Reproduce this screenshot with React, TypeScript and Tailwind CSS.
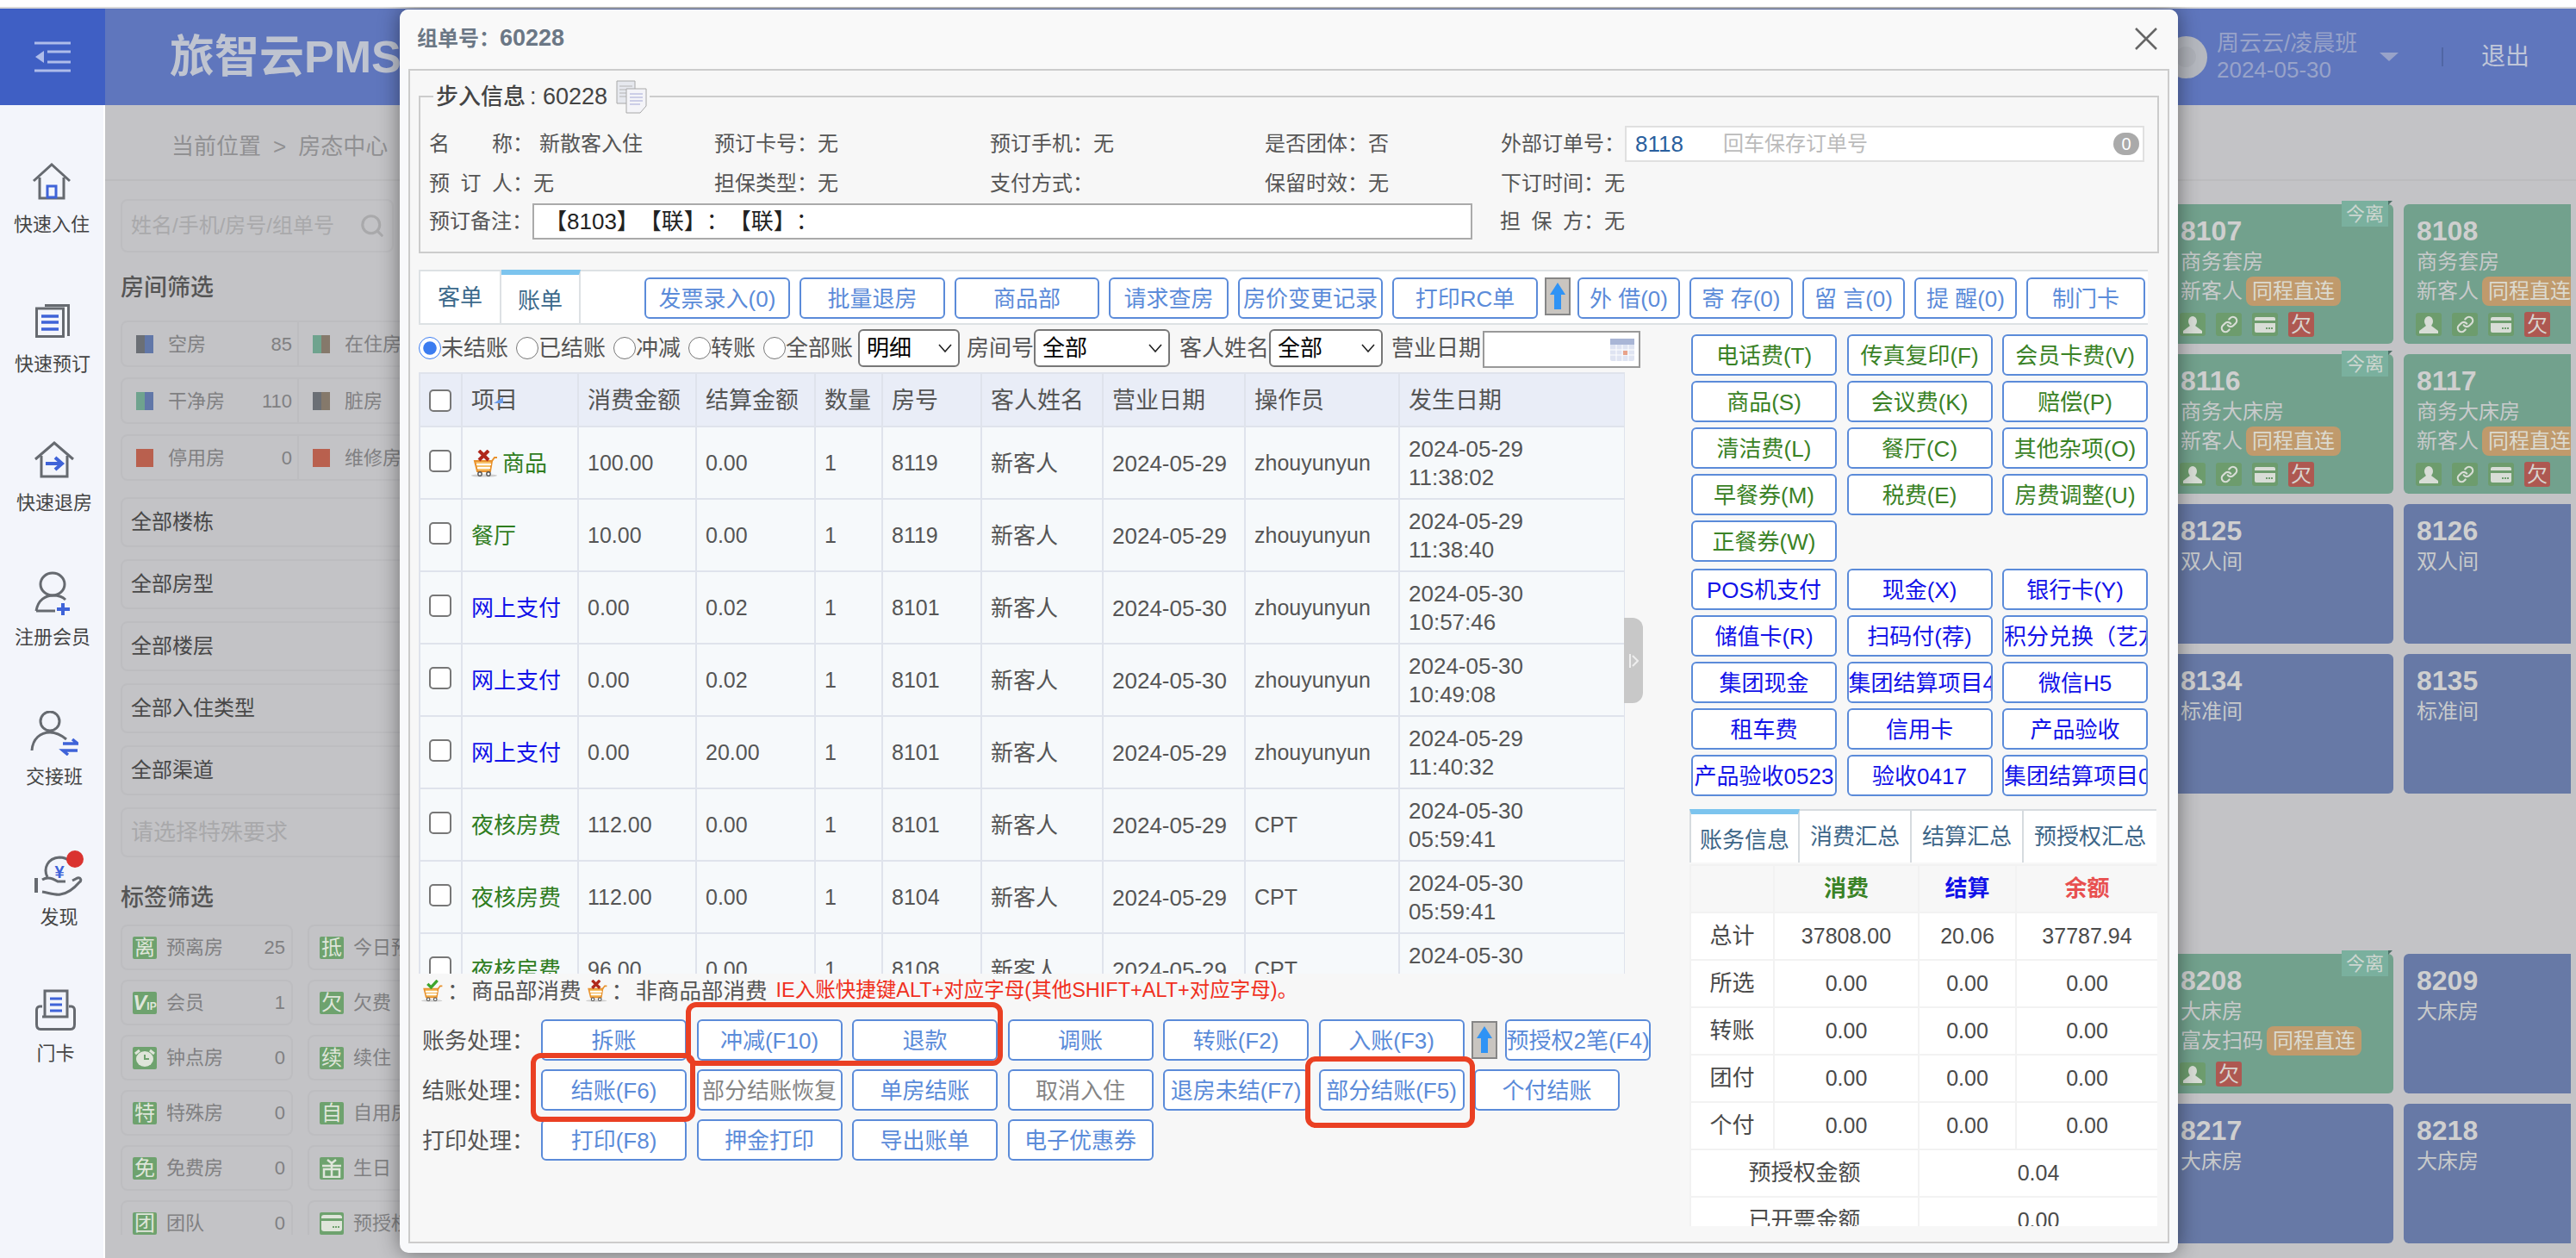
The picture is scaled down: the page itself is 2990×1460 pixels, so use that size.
import type { ReactNode } from 'react';
import { Link, Search } from 'lucide-react';

const blueBtn = 'text-[#5b8bd9]';
const grayBtn = 'text-[#858585]';
const greenBtn = 'text-[#3a8226]';
const payBtn = 'text-[#1212e8]';

function Btn({ label, className = '' }: { label: string; className?: string }) {
  return (
    <button className={`h-[48px] shrink-0 overflow-hidden whitespace-nowrap rounded-[6px] border-2 border-[#5b8bd9] bg-white pt-[2px] text-[26px] ${className}`}>
      {label}
    </button>
  );
}

function ArrowBox() {
  return (
    <svg width="30" height="44" viewBox="0 0 30 44" className="shrink-0">
      <rect x="1" y="1" width="28" height="42" fill="#c9c5c0" stroke="#868686" strokeWidth="2" />
      <path d="M15 6 L24 20 H19 V37 H11 V20 H6 Z" fill="#2f93f5" />
    </svg>
  );
}

function Cart({ mark, size = 32 }: { mark: 'x' | 'check'; size?: number }) {
  return (
    <svg width={size} height={size} viewBox="0 0 32 32" className="shrink-0">
      <ellipse cx="15" cy="30" rx="15" ry="1.6" fill="#cfcfcf" />
      <path d="M4 13 H24 L22 25 H7 Z" fill="#f6c26b" stroke="#e8912c" strokeWidth="2" />
      <path d="M6 17 H23 M7 21 H22" stroke="#fff" strokeWidth="2" />
      <path d="M24 13 L27 9 H30" fill="none" stroke="#e8912c" strokeWidth="2" />
      <circle cx="10" cy="28" r="2.2" fill="#fff" stroke="#555" strokeWidth="1.4" />
      <circle cx="20" cy="28" r="2.2" fill="#fff" stroke="#555" strokeWidth="1.4" />
      {mark === 'x' ? (
        <path d="M9 1 L20 12 M20 1 L9 12" stroke="#b0281c" strokeWidth="4" />
      ) : (
        <path d="M9 6 L14 11 L23 1" fill="none" stroke="#3ea52c" strokeWidth="4" />
      )}
    </svg>
  );
}

const gray = '#666a70';
const iconBlue = '#3f63d8';

const sideItems = [
  {
    label: '快速入住', box: 'h-[162px] pl-[16px]',
    icon: (
      <svg width="46" height="43" viewBox="0 0 46 43" fill="none">
        <path d="M2 21 L23 2 L44 21" stroke={gray} strokeWidth="3" />
        <path d="M9 17 V41 H37 V17" stroke={gray} strokeWidth="3" />
        <rect x="18" y="27" width="10" height="13" stroke={iconBlue} strokeWidth="3" />
      </svg>
    ),
  },
  {
    label: '快速预订', box: 'h-[161px] pl-[17px]',
    icon: (
      <svg width="40" height="39" viewBox="0 0 40 39" fill="none">
        <rect x="1.5" y="5" width="31" height="32.5" stroke={gray} strokeWidth="3" />
        <path d="M11 1.5 H38.5 V37" stroke={gray} strokeWidth="3" />
        <path d="M7 14 H27 M7 21 H27 M7 29 H27" stroke={iconBlue} strokeWidth="3.5" />
      </svg>
    ),
  },
  {
    label: '快速退房', box: 'h-[156px] pl-[19px]',
    icon: (
      <svg width="48" height="43" viewBox="0 0 48 43" fill="none">
        <path d="M2 21 L24 2 L46 21" stroke={gray} strokeWidth="3" />
        <path d="M9 17 V41 H39 V17" stroke={gray} strokeWidth="3" />
        <path d="M14 26 H32 M25 19 L33 26 L25 33" stroke={iconBlue} strokeWidth="4" />
      </svg>
    ),
  },
  {
    label: '注册会员', box: 'h-[162px] pl-[17px]',
    icon: (
      <svg width="42" height="52" viewBox="0 0 42 52" fill="none">
        <ellipse cx="21" cy="15" rx="14" ry="13" stroke={gray} strokeWidth="3" />
        <path d="M2 46 C4 33 13 28 22 28 C28 28 33 30 36 33" stroke={gray} strokeWidth="3" />
        <path d="M2 46 H24" stroke={gray} strokeWidth="3" />
        <path d="M33 37 V51 M26 44 H41" stroke={iconBlue} strokeWidth="4" />
      </svg>
    ),
  },
  {
    label: '交接班', box: 'h-[163px] pl-[30px]',
    icon: (
      <svg width="56" height="52" viewBox="0 0 56 52" fill="none">
        <ellipse cx="23" cy="12" rx="11" ry="11" stroke={gray} strokeWidth="3" />
        <path d="M2 46 C3 32 12 25 23 25 C30 25 36 28 42 33" stroke={gray} strokeWidth="3" />
        <path d="M38 38 H55 L49 33 M55 46 H38 L44 51" stroke={iconBlue} strokeWidth="3.5" />
      </svg>
    ),
  },
  {
    label: '发现', box: 'h-[158px] pl-[40px]',
    icon: (
      <svg width="57" height="57" viewBox="0 0 57 57" fill="none">
        <path d="M15 32 C10 22 15 10 29 9 C34 9 37 10 40 13" stroke={gray} strokeWidth="3" />
        <text x="29" y="33" textAnchor="middle" fontSize="20" fontWeight="700" fill={iconBlue} fontFamily="Liberation Sans">¥</text>
        <path d="M2 33 V50" stroke={gray} strokeWidth="4" />
        <path d="M9 35 C15 31 21 33 27 37 H36 M44 36 L50 33 C54 32 55 36 52 38 C46 45 38 51 30 52 C24 53 16 50 9 49" stroke={gray} strokeWidth="3" />
        <circle cx="47" cy="11" r="10" fill="#da3330" />
      </svg>
    ),
  },
  {
    label: '门卡', box: 'h-[100px] pl-[41px]',
    icon: (
      <svg width="47" height="48" viewBox="0 0 47 48" fill="none">
        <path d="M11 32 V2 H37 V32 H8" stroke={gray} strokeWidth="3" />
        <path d="M17 11 H31 M17 18 H31 M17 25 H31" stroke={iconBlue} strokeWidth="3" />
        <path d="M8 20 H5 C3 20 1.5 22 1.5 24 V41 C1.5 45 3 46.5 6 46.5 H41 C44 46.5 45.5 45 45.5 41 V24 C45.5 22 44 20 42 20 H39" stroke={gray} strokeWidth="3" />
      </svg>
    ),
  },
];

function Sidebar() {
  return (
    <div className="flex w-[120px] shrink-0 flex-col bg-[#f3f5fb] pt-[66px]">
      {sideItems.map((item) => (
        <div key={item.label} className={item.box}>
          <div className="flex w-fit flex-col items-center">
            <div className="flex h-[44px] items-center">{item.icon}</div>
            <div className="mt-[14px] whitespace-nowrap text-[22px] leading-[30px] text-[#444]">{item.label}</div>
          </div>
        </div>
      ))}
    </div>
  );
}

function Swatch({ colors }: { colors: string[] }) {
  return (
    <span className="flex h-[21px] w-[20px] shrink-0">
      {colors.map((c, i) => (
        <span key={i} className="h-full flex-1" style={{ backgroundColor: c }} />
      ))}
    </span>
  );
}

const statusRows = [
  { a: { colors: ['#6b6f75', '#6177a8'], text: '空房', n: '85' }, b: { colors: ['#6fa38e', '#85796b'], text: '在住房' } },
  { a: { colors: ['#6fa38e', '#6177a8'], text: '干净房', n: '110' }, b: { colors: ['#6b6f75', '#85796b'], text: '脏房' } },
  { a: { colors: ['#b9604e'], text: '停用房', n: '0' }, b: { colors: ['#b9604e'], text: '维修房' } },
];

const selects = ['全部楼栋', '全部房型', '全部楼层', '全部入住类型', '全部渠道'];

function CardGlyph() {
  return (
    <svg width="24" height="19" viewBox="0 0 24 19">
      <rect width="24" height="19" rx="3" fill="#dfe5da" />
      <rect y="4" width="24" height="3" fill="#6ea26e" />
      <path d="M13 14 H21" stroke="#6ea26e" strokeWidth="2" strokeDasharray="2 1" />
    </svg>
  );
}

const clockGlyph = (
  <svg width="26" height="22" viewBox="0 0 26 22">
    <ellipse cx="13" cy="12" rx="10" ry="9" fill="#dfe5da" />
    <path d="M13 7 V12 H18" fill="none" stroke="#6ea26e" strokeWidth="2" />
    <path d="M2 6 L7 2 M24 6 L19 2" stroke="#dfe5da" strokeWidth="3" />
  </svg>
);

const giftGlyph = (
  <svg width="24" height="22" viewBox="0 0 24 22" fill="none" stroke="#dfe5da" strokeWidth="2.5">
    <path d="M1 8 H23 M3 12 H21 V21 H3 Z M12 3 V21 M12 5 L7 1 M12 5 L17 1" />
  </svg>
);

const vipGlyph = (
  <span className="flex items-baseline font-bold italic leading-none">
    <span className="text-[24px]">V</span>
    <span className="text-[12px] not-italic">IP</span>
  </span>
);

const tagRows: { ia: ReactNode; a: string; n: string; ib: ReactNode; b: string }[] = [
  { ia: '离', a: '预离房', n: '25', ib: '抵', b: '今日预抵' },
  { ia: vipGlyph, a: '会员', n: '1', ib: '欠', b: '欠费' },
  { ia: clockGlyph, a: '钟点房', n: '0', ib: '续', b: '续住' },
  { ia: '特', a: '特殊房', n: '0', ib: '自', b: '自用房' },
  { ia: '免', a: '免费房', n: '0', ib: giftGlyph, b: '生日' },
  { ia: '团', a: '团队', n: '0', ib: <CardGlyph />, b: '预授权' },
];

function TagBox({ icon, text, n }: { icon: ReactNode; text: string; n?: string }) {
  return (
    <div className="flex h-[53px] w-[200px] shrink-0 items-center whitespace-nowrap rounded-[8px] border-2 border-[#bdbdc0] pl-[12px] pr-[7px] text-[22px] text-[#808082]">
      <span className="flex h-[26px] w-[28px] shrink-0 items-center justify-center rounded-[2px] bg-[#6ea26e] text-[24px] text-[#dfe5da]">{icon}</span>
      <span className="ml-[11px]">{text}</span>
      <span className="ml-auto">{n}</span>
    </div>
  );
}

function FilterColumn() {
  return (
    <div className="ml-[18px] flex w-[430px] shrink-0 flex-col pt-[21px]">
      <div className="flex h-[62px] w-[317px] items-center rounded-[8px] border-2 border-[#bdbdc0] pl-[10px] pr-[8px]">
        <span className="whitespace-nowrap text-[24px] text-[#a9a9ab]">姓名/手机/房号/组单号</span>
        <Search size={30} strokeWidth={2.5} className="ml-auto text-[#a9a9ab]" />
      </div>
      <div className="mt-[21px] h-[40px] text-[27px] font-medium leading-[40px] text-[#555]">房间筛选</div>
      <div className="mt-[18px] flex flex-col gap-[12px]">
        {statusRows.map((row) => (
          <div key={row.a.text} className="flex h-[54px] items-center overflow-hidden rounded-[8px] border-2 border-[#bdbdc0] text-[22px] text-[#808082]">
            <div className="flex h-full w-[205px] shrink-0 items-center border-r-2 border-[#bdbdc0] pl-[16px] pr-[6px]">
              <Swatch colors={row.a.colors} />
              <span className="ml-[17px]">{row.a.text}</span>
              <span className="ml-auto">{row.a.n}</span>
            </div>
            <div className="flex items-center pl-[16px]">
              <Swatch colors={row.b.colors} />
              <span className="ml-[17px]">{row.b.text}</span>
            </div>
          </div>
        ))}
      </div>
      <div className="mt-[19px] flex flex-col gap-[14px]">
        {selects.map((s) => (
          <div key={s} className="flex h-[58px] items-center rounded-[8px] border-2 border-[#bdbdc0] pl-[10px] text-[24px] text-[#484848]">{s}</div>
        ))}
        <div className="flex h-[58px] items-center rounded-[8px] border-2 border-[#bdbdc0] pl-[10px] text-[26px] text-[#a9a9ab]">请选择特殊要求</div>
      </div>
      <div className="mt-[27px] h-[40px] text-[27px] font-medium leading-[40px] text-[#555]">标签筛选</div>
      <div className="mt-[11px] flex h-[360px] flex-col gap-[11px] overflow-hidden">
        {tagRows.map((row) => (
          <div key={row.a} className="flex gap-[17px]">
            <TagBox icon={row.ia} text={row.a} n={row.n} />
            <TagBox icon={row.ib} text={row.b} />
          </div>
        ))}
      </div>
    </div>
  );
}

type RoomIcon = 'user' | 'link' | 'card' | 'owe';

const allIcons: RoomIcon[] = ['user', 'link', 'card', 'owe'];

const rooms: { no: string; type: string; guest?: string; today?: boolean; icons?: RoomIcon[]; box?: string }[] = [
  { no: '8107', type: '商务套房', guest: '新客人', today: true, icons: allIcons },
  { no: '8108', type: '商务套房', guest: '新客人', icons: allIcons },
  { no: '8116', type: '商务大床房', guest: '新客人', today: true, icons: allIcons },
  { no: '8117', type: '商务大床房', guest: '新客人', icons: allIcons },
  { no: '8125', type: '双人间' },
  { no: '8126', type: '双人间' },
  { no: '8134', type: '标准间' },
  { no: '8135', type: '标准间' },
  { no: '8208', type: '大床房', guest: '富友扫码', today: true, icons: ['user', 'owe'], box: 'mt-[174px]' },
  { no: '8209', type: '大床房', box: 'mt-[174px]' },
  { no: '8217', type: '大床房' },
  { no: '8218', type: '大床房' },
];

function RoomBadge({ kind }: { kind: RoomIcon }) {
  if (kind === 'owe') {
    return <span className="flex h-[29px] w-[30px] items-center justify-center rounded-[3px] bg-[#ae5851] text-[24px] text-[#d8d4d0]">欠</span>;
  }
  return (
    <span className="flex h-[27px] w-[30px] items-center justify-center rounded-[3px] bg-[#6d9c6d] text-[#d8ddd6]">
      {kind === 'user' && (
        <svg width="24" height="20" viewBox="0 0 24 20" fill="currentColor">
          <ellipse cx="12" cy="6" rx="5" ry="6" />
          <path d="M9 11 H15 L23 17 V20 H1 V17 Z" />
        </svg>
      )}
      {kind === 'link' && <Link size={21} strokeWidth={2.5} />}
      {kind === 'card' && (
        <svg width="24" height="18" viewBox="0 0 24 18">
          <rect width="24" height="18" rx="2" fill="currentColor" />
          <rect y="4" width="24" height="3" fill="#6d9c6d" />
          <path d="M13 13 H21" stroke="#6d9c6d" strokeWidth="2" strokeDasharray="2 1" />
        </svg>
      )}
    </span>
  );
}

function RoomCard({ no, type, guest, today, icons, box = '' }: (typeof rooms)[number]) {
  return (
    <div className={`relative h-[162px] w-[262px] rounded-[6px] pl-[15px] pt-[15px] ${guest ? 'bg-[#72a18d]' : 'bg-[#6779a6]'} ${box}`}>
      {today && (
        <>
          <span className="absolute right-[6px] top-[-4px] flex h-[30px] w-[54px] items-center justify-center bg-[#7ab09e] text-[22px] text-[#cdd6d0]">今离</span>
          <span className="absolute right-[1px] top-[-4px] h-0 w-0 border-b-[5px] border-l-[5px] border-b-transparent border-l-[#4d6f66]" />
        </>
      )}
      <div className="text-[32px] font-black leading-[32px] text-[#cfcfcf]">{no}</div>
      <div className="mt-[3px] whitespace-nowrap text-[24px] leading-[34px] text-[#c8cacb]">{type}</div>
      {guest && (
        <div className="flex h-[34px] items-center whitespace-nowrap text-[24px] text-[#c8cacb]">
          {guest}
          <span className="ml-[4px] flex h-[34px] items-center rounded-[8px] bg-[#c09a6c] px-[7px] text-[#dcdad0]">同程直连</span>
        </div>
      )}
      {icons && (
        <div className="mt-[7px] -ml-px flex items-center gap-[12px]">
          {icons.map((k) => (
            <RoomBadge key={k} kind={k} />
          ))}
        </div>
      )}
    </div>
  );
}

function Background() {
  return (
    <div className="flex h-full flex-col">
      <div className="h-[10px] shrink-0 border-b-2 border-[#d8d8d8] bg-white" />
      <div className="flex h-[112px] shrink-0 items-center bg-[#5f76bd]">
        <div className="flex h-full w-[122px] shrink-0 items-center justify-center bg-[#3f5fc4]">
          <svg width="42" height="36" viewBox="0 0 42 36" fill="none" stroke="#aebcea" strokeWidth="3">
            <path d="M0 2 H42 M15 12 H42 M15 24 H42 M0 34 H42" />
            <path d="M11 11 V25 L1 18 Z" fill="#aebcea" stroke="none" />
          </svg>
        </div>
        <div className="ml-[75px] text-[52px] font-bold leading-none text-[#bfc4d0]">旅智云PMS</div>
        <div className="ml-auto flex items-center pr-[54px]">
          <div className="flex h-[49px] w-[49px] items-center justify-center rounded-full bg-[#b5b8bf]">
            <div className="h-[24px] w-[24px] rounded-full bg-[#aeb1b8]" />
          </div>
          <div className="ml-[11px] w-[165px] whitespace-nowrap text-[26px] leading-[31px] text-[#98a3c9]">
            <div>周云云/凌晨班</div>
            <div>2024-05-30</div>
          </div>
          <div className="ml-[24px] h-0 w-0 border-x-[11px] border-t-[10px] border-x-transparent border-t-[#98a3c9]" />
          <div className="ml-[50px] h-[22px] w-[2px] bg-[#5066a4]" />
          <div className="ml-[44px] text-[28px] text-[#c0c6d8]">退出</div>
        </div>
      </div>
      <div className="flex min-h-0 flex-1">
        <Sidebar />
        <div className="ml-[2px] flex min-w-0 flex-1 flex-col bg-[#c3c3c6]">
          <div className="flex h-[88px] shrink-0 items-center border-b-2 border-[#bcbcbe] pl-[77px] pt-[11px] text-[26px] text-[#909092]">
            当前位置<span className="mx-[14px]">&gt;</span>房态中心
          </div>
          <div className="flex min-h-0 flex-1">
            <FilterColumn />
            <div className="ml-auto mr-[6px] w-[468px] overflow-hidden pt-[27px]">
              <div className="grid w-[536px] grid-cols-[262px_262px] gap-x-[12px] gap-y-[12px]">
                {rooms.map((r) => (
                  <RoomCard key={r.no} {...r} />
                ))}
              </div>
            </div>
          </div>
        </div>
      </div>
    </div>
  );
}

function Info({ label, value, w }: { label: ReactNode; value?: string; w: string }) {
  return (
    <div className={`flex shrink-0 items-center whitespace-nowrap ${w}`}>
      {label}
      {value && <span>{value}</span>}
    </div>
  );
}

function Spaced({ chars, pad }: { chars: string[]; pad: string }) {
  return (
    <span className={`flex ${pad}`}>
      <span className="flex w-[97px] justify-between">
        {chars.map((c) => (
          <span key={c}>{c}</span>
        ))}
      </span>
      <span>：</span>
    </span>
  );
}

function GuestInfo() {
  return (
    <fieldset className="mt-[10px] h-[202px] border-2 border-[#ccc] pl-[10px]">
      <legend className="ml-[5px] flex h-[40px] items-center px-[3px] text-[26px] text-[#444]">
        <span className="font-medium">步入信息</span>
        <span className="ml-[5px] text-[27px]">: 60228</span>
        <svg width="36" height="39" viewBox="0 0 36 39" className="ml-[10px]">
          <path d="M1 1 H22 V27 H1 Z" fill="#e6e8ee" stroke="#a8a8a8" />
          <path d="M4 7 H19 M4 11 H19 M4 15 H19 M4 19 H19" stroke="#b4b4b4" />
          <path d="M12 10 H35 V30 L28 38 H12 Z" fill="#f4f4f8" stroke="#a8a8a8" />
          <path d="M16 16 H31 M16 20 H31 M16 24 H31 M16 28 H28" stroke="#a4a8d6" />
        </svg>
      </legend>
      <div className="mt-[12px] flex h-[46px] items-center text-[24px] text-[#555]">
        <Info w="w-[331px]" label={<Spaced chars={['名', '称']} pad="mr-[7px]" />} value="新散客入住" />
        <Info w="w-[320px]" label="预订卡号：" value="无" />
        <Info w="w-[319px]" label="预订手机：" value="无" />
        <Info w="w-[274px]" label="是否团体：" value="否" />
        <Info w="w-[144px]" label="外部订单号：" />
        <div className="flex h-[42px] w-[603px] items-center border-2 border-[#e0e0e0] bg-white pl-[10px] pr-[4px]">
          <span className="w-[102px] text-[26px] text-[#2a5f9e]">8118</span>
          <span className="text-[#bbb]">回车保存订单号</span>
          <span className="ml-auto flex h-[26px] w-[30px] items-center justify-center rounded-full bg-[#aaa] text-[20px] text-white">0</span>
        </div>
      </div>
      <div className="flex h-[46px] items-center text-[24px] text-[#555]">
        <Info w="w-[331px]" label={<Spaced chars={['预', '订', '人']} pad="" />} value="无" />
        <Info w="w-[320px]" label="担保类型：" value="无" />
        <Info w="w-[319px]" label="支付方式：" />
        <Info w="w-[274px]" label="保留时效：" value="无" />
        <Info w="w-[144px]" label="下订时间：" value="无" />
      </div>
      <div className="flex h-[42px] items-center text-[24px] text-[#555]">
        <span className="w-[120px] shrink-0 whitespace-nowrap">预订备注：</span>
        <div className="flex h-[42px] w-[1091px] shrink-0 items-center whitespace-pre border-2 border-[#aaa] bg-white pl-[12px] text-[26px] text-[#222] [text-spacing-trim:space-all]">【8103】【联】：【联】：</div>
        <span className="ml-[32px]">
          <Info w="" label={<span className="flex"><span className="flex w-[97px] justify-between"><span>担</span><span>保</span><span>方</span></span><span>：</span></span>} value="无" />
        </span>
      </div>
    </fieldset>
  );
}

const topButtons = [
  { label: '发票录入(0)', w: 'w-[169px]' },
  { label: '批量退房', w: 'w-[169px]' },
  { label: '商品部', w: 'w-[168px]' },
  { label: '请求查房', w: 'w-[139px]' },
  { label: '房价变更记录', w: 'w-[168px]' },
  { label: '打印RC单', w: 'w-[169px]' },
];

const topButtons2 = [
  { label: '外 借(0)', w: 'w-[119px]' },
  { label: '寄 存(0)', w: 'w-[120px]' },
  { label: '留 言(0)', w: 'w-[119px]' },
  { label: '提 醒(0)', w: 'w-[119px]' },
  { label: '制门卡', w: 'w-[138px]' },
];

function TabBar() {
  return (
    <div className="mt-[19px] flex h-[64px] w-[2007px] border-y-2 border-[#dde1e4] bg-white">
      <div className="flex w-[96px] items-center justify-center border-x-2 border-[#dde1e4] text-[26px] text-[#3c6a8c]">客单</div>
      <div className="-mt-[2px] flex h-[64px] w-[92px] items-center justify-center border-t-[6px] border-r-2 border-t-[#7cc4ee] border-r-[#dde1e4] pt-[2px] text-[26px] text-[#3c6a8c]">账单</div>
      <div className="ml-[74px] flex items-start gap-[11px] pt-[7px]">
        {topButtons.map((b) => (
          <Btn key={b.label} label={b.label} className={`${b.w} ${blueBtn}`} />
        ))}
        <span className="-mx-[3px]"><ArrowBox /></span>
        {topButtons2.map((b) => (
          <Btn key={b.label} label={b.label} className={`${b.w} ${blueBtn}`} />
        ))}
      </div>
    </div>
  );
}

const radios = ['未结账', '已结账', '冲减', '转账', '全部账'];

function Sel({ label, w }: { label: string; w: string }) {
  return (
    <span className={`relative block h-[44px] shrink-0 ${w}`}>
      <select className="h-full w-full appearance-none rounded-[6px] border-2 border-[#777] bg-white pl-[8px] text-[26px] text-black" defaultValue={label}>
        <option>{label}</option>
      </select>
      <svg width="16" height="10" viewBox="0 0 16 10" fill="none" stroke="#222" strokeWidth="1.6" className="pointer-events-none absolute right-[9px] top-[17px]">
        <path d="M1 1 L8 9 L15 1" />
      </svg>
    </span>
  );
}

function FilterRow() {
  return (
    <div className="mt-[5px] flex h-[50px] items-start whitespace-nowrap text-[26px] text-[#555]">
      <div className="flex h-[44px] items-center">
        {radios.map((r, i) => (
          <label key={r} className="mr-[9px] flex items-center">
            <input type="radio" name="kind" defaultChecked={i === 0} className="m-0 h-[26px] w-[26px] accent-[#3b7cf0]" />
            {r}
          </label>
        ))}
      </div>
      <span className="-ml-[3px]"><Sel label="明细" w="w-[118px]" /></span>
      <span className="ml-[8px] leading-[44px]">房间号</span>
      <Sel label="全部" w="w-[158px]" />
      <span className="ml-[11px] leading-[44px]">客人姓名</span>
      <Sel label="全部" w="w-[132px]" />
      <span className="ml-[10px] leading-[44px]">营业日期</span>
      <div className="ml-[2px] mt-[2px] flex h-[43px] w-[183px] items-center justify-end border-2 border-[#999] bg-white pr-[5px]">
        <svg width="28" height="26" viewBox="0 0 28 26">
          <rect width="28" height="26" rx="2" fill="#dfe4f2" />
          <rect width="28" height="7" fill="#a9b6d6" />
          <path d="M7 7 V26 M14 7 V26 M21 7 V26 M0 13 H28 M0 19 H28" stroke="#fff" />
          <rect x="15" y="14" width="5" height="5" fill="#e8a38a" />
        </svg>
      </div>
    </div>
  );
}

const bills = [
  { item: '商品', cls: 'text-[#2f7d1e]', cart: true, a: '100.00', b: '0.00', room: '8119', biz: '2024-05-29', op: 'zhouyunyun', d: '2024-05-29', t: '11:38:02' },
  { item: '餐厅', cls: 'text-[#2f7d1e]', a: '10.00', b: '0.00', room: '8119', biz: '2024-05-29', op: 'zhouyunyun', d: '2024-05-29', t: '11:38:40' },
  { item: '网上支付', cls: 'text-[#1212e8]', a: '0.00', b: '0.02', room: '8101', biz: '2024-05-30', op: 'zhouyunyun', d: '2024-05-30', t: '10:57:46' },
  { item: '网上支付', cls: 'text-[#1212e8]', a: '0.00', b: '0.02', room: '8101', biz: '2024-05-30', op: 'zhouyunyun', d: '2024-05-30', t: '10:49:08' },
  { item: '网上支付', cls: 'text-[#1212e8]', a: '0.00', b: '20.00', room: '8101', biz: '2024-05-29', op: 'zhouyunyun', d: '2024-05-29', t: '11:40:32' },
  { item: '夜核房费', cls: 'text-[#2f7d1e]', a: '112.00', b: '0.00', room: '8101', biz: '2024-05-29', op: 'CPT', d: '2024-05-30', t: '05:59:41' },
  { item: '夜核房费', cls: 'text-[#2f7d1e]', a: '112.00', b: '0.00', room: '8104', biz: '2024-05-29', op: 'CPT', d: '2024-05-30', t: '05:59:41' },
  { item: '夜核房费', cls: 'text-[#2f7d1e]', a: '96.00', b: '0.00', room: '8108', biz: '2024-05-29', op: 'CPT', d: '2024-05-30', t: '05:59:41' },
];

const widths = ['w-[49px]', 'w-[135px]', 'w-[137px]', 'w-[138px]', 'w-[78px]', 'w-[115px]', 'w-[141px]', 'w-[165px]', 'w-[179px]', 'w-[262px]'];
const heads = ['项目', '消费金额', '结算金额', '数量', '房号', '客人姓名', '营业日期', '操作员', '发生日期'];

function Check({ box = '' }: { box?: string }) {
  return <input type="checkbox" className={`block h-[26px] w-[26px] appearance-none rounded-[5px] border-2 border-[#777] bg-white ${box}`} />;
}

function BillTable() {
  const cell = 'border-2 border-[#dfe3ec] pl-[10px] pt-[2px] text-left font-normal';
  return (
    <div className="h-[698px] w-[1400px] overflow-hidden">
      <table className="w-[1399px] table-fixed border-collapse bg-[#f6f9fb] text-[25px] text-[#555]">
        <colgroup>
          {widths.map((w) => (
            <col key={w} className={w} />
          ))}
        </colgroup>
        <thead>
          <tr className="h-[62px] bg-[#e9edf7]">
            <th className={cell}><Check /></th>
            {heads.map((h) => (
              <th key={h} className={`${cell} relative whitespace-nowrap text-[27px]`}>
                {h}
                {h === '项目' && (
                  <svg width="11" height="7" viewBox="0 0 11 7" className="absolute left-[36px] top-[27px]">
                    <path d="M0 7 L11 0 V7 Z" fill="#6b9be8" />
                  </svg>
                )}
              </th>
            ))}
          </tr>
        </thead>
        <tbody>
          {bills.map((row, i) => (
            <tr key={i} className="h-[84px]">
              <td className={cell}><Check box="-mt-[6px]" /></td>
              <td className={`${cell} whitespace-nowrap text-[26px] ${row.cls}`}>
                <span className="flex items-center gap-[4px]">
                  {row.cart && <Cart mark="x" />}
                  {row.item}
                </span>
              </td>
              <td className={cell}>{row.a}</td>
              <td className={cell}>{row.b}</td>
              <td className={cell}>1</td>
              <td className={cell}>{row.room}</td>
              <td className={`${cell} text-[26px]`}>新客人</td>
              <td className={`${cell} text-[26px]`}>{row.biz}</td>
              <td className={cell}>{row.op}</td>
              <td className={`${cell} text-[26px] leading-[33px]`}>
                {row.d}
                <br />
                {row.t}
              </td>
            </tr>
          ))}
        </tbody>
      </table>
    </div>
  );
}

function ActionRow({ title, children }: { title: string; children: ReactNode }) {
  return (
    <div className="flex h-[48px] items-center">
      <span className="w-[142px] shrink-0 whitespace-nowrap pl-[4px] pt-[2px] text-[26px] text-[#555]">{title}：</span>
      <div className="flex items-center gap-[11.5px]">{children}</div>
    </div>
  );
}

const feeButtons = ['电话费(T)', '传真复印(F)', '会员卡费(V)', '商品(S)', '会议费(K)', '赔偿(P)', '清洁费(L)', '餐厅(C)', '其他杂项(O)', '早餐券(M)', '税费(E)', '房费调整(U)', '正餐券(W)'];
const payButtons = ['POS机支付', '现金(X)', '银行卡(Y)', '储值卡(R)', '扫码付(荐)', '积分兑换（艺龙）', '集团现金', '集团结算项目417', '微信H5', '租车费', '信用卡', '产品验收', '产品验收0523', '验收0417', '集团结算项目0523'];

const summaryRows = [
  ['总计', '37808.00', '20.06', '37787.94'],
  ['所选', '0.00', '0.00', '0.00'],
  ['转账', '0.00', '0.00', '0.00'],
  ['团付', '0.00', '0.00', '0.00'],
  ['个付', '0.00', '0.00', '0.00'],
];

function SummaryPanel() {
  const cell = 'border-2 border-[#f2f2f2] text-center';
  return (
    <div className="-ml-[2px] mt-[15px]">
      <div className="flex h-[62px] w-[542px] border-t-2 border-[#d6dbdf] bg-white text-[26px] text-[#3d6688]">
        <div className="-mt-[2px] flex h-[62px] w-[128px] items-center justify-center border-x-2 border-t-[6px] border-x-[#d6dbdf] border-t-[#7cc4ee] pt-[4px]">账务信息</div>
        <div className="flex w-[130px] items-center justify-center border-r-2 border-[#d6dbdf]">消费汇总</div>
        <div className="flex w-[130px] items-center justify-center border-r-2 border-[#d6dbdf]">结算汇总</div>
        <div className="flex w-[154px] items-center justify-center">预授权汇总</div>
      </div>
      <div className="mt-[2px] h-[420px] w-[543px] overflow-hidden">
        <table className="w-[543px] table-fixed border-collapse bg-white text-[25px] text-[#4a4a4a]">
          <colgroup>
            <col className="w-[97px]" />
            <col className="w-[168px]" />
            <col className="w-[113px]" />
            <col className="w-[165px]" />
          </colgroup>
          <tbody>
            <tr className="h-[55px] bg-[#f7f7f7] text-[26px] font-bold">
              <td className={cell} />
              <td className={`${cell} text-[#3a8226]`}>消费</td>
              <td className={`${cell} text-[#1212e8]`}>结算</td>
              <td className={`${cell} text-[#e85050]`}>余额</td>
            </tr>
            {summaryRows.map((r) => (
              <tr key={r[0]} className="h-[55px]">
                <td className={`${cell} text-[26px]`}>{r[0]}</td>
                <td className={cell}>{r[1]}</td>
                <td className={cell}>{r[2]}</td>
                <td className={cell}>{r[3]}</td>
              </tr>
            ))}
            <tr className="h-[55px]">
              <td colSpan={2} className={`${cell} text-[26px]`}>预授权金额</td>
              <td colSpan={2} className={cell}>0.04</td>
            </tr>
            <tr className="h-[55px]">
              <td colSpan={2} className={`${cell} text-[26px]`}>已开票金额</td>
              <td colSpan={2} className={cell}>0.00</td>
            </tr>
          </tbody>
        </table>
      </div>
    </div>
  );
}

function Dialog() {
  const w = 'w-[169px]';
  return (
    <div className="absolute left-[464px] top-[3px] flex h-[1443px] w-[2064px] flex-col rounded-[10px] bg-[#f8f9fb] shadow-[0_0_24px_rgba(0,0,0,0.45)]">
      <div className="flex h-[69px] shrink-0 items-center justify-between rounded-t-[10px] bg-[#f9f9f9] pb-[2px] pl-[20px] pr-[23px]">
        <span className="text-[24px] font-bold text-[#6b7785]">组单号：<span className="text-[27px]">60228</span></span>
        <svg width="28" height="28" viewBox="0 0 28 28" stroke="#666" strokeWidth="2.5">
          <path d="M2 2 L26 26 M26 2 L2 26" />
        </svg>
      </div>
      <div className="mx-[10px] h-[1363px] border-2 border-[#ccc] bg-[#f7f7f7] px-[10px]">
        <GuestInfo />
        <TabBar />
        <div className="flex">
          <div className="w-[1477px] shrink-0">
            <FilterRow />
            <BillTable />
            <div className="flex h-[40px] items-center whitespace-nowrap text-[25.5px] text-[#555]">
              <span className="ml-[3px]"><Cart mark="check" size={26} /></span>
              <span className="ml-[4px] w-[28px]">：</span>
              商品部消费
              <span className="ml-[5px]"><Cart mark="x" size={26} /></span>
              <span className="ml-[4px] w-[28px]">：</span>
              非商品部消费
              <span className="ml-[10px] text-[23.5px] text-[#f0301e]">IE入账快捷键ALT+对应字母(其他SHIFT+ALT+对应字母)。</span>
            </div>
            <div className="mt-[13px] flex flex-col gap-[10px]">
              <ActionRow title="账务处理">
                <Btn label="拆账" className={`${w} ${blueBtn}`} />
                <Btn label="冲减(F10)" className={`${w} ${blueBtn}`} />
                <Btn label="退款" className={`${w} ${blueBtn}`} />
                <Btn label="调账" className={`${w} ${blueBtn}`} />
                <Btn label="转账(F2)" className={`${w} ${blueBtn}`} />
                <Btn label="入账(F3)" className={`${w} ${blueBtn}`} />
                <span className="-mx-[3px]"><ArrowBox /></span>
                <Btn label="预授权2笔(F4)" className={`${w} ${blueBtn}`} />
              </ActionRow>
              <ActionRow title="结账处理">
                <Btn label="结账(F6)" className={`${w} ${blueBtn}`} />
                <Btn label="部分结账恢复" className={`${w} ${grayBtn}`} />
                <Btn label="单房结账" className={`${w} ${blueBtn}`} />
                <Btn label="取消入住" className={`${w} ${grayBtn}`} />
                <Btn label="退房未结(F7)" className={`${w} ${blueBtn}`} />
                <Btn label="部分结账(F5)" className={`${w} ${blueBtn}`} />
                <Btn label="个付结账" className={`${w} ${blueBtn}`} />
              </ActionRow>
              <ActionRow title="打印处理">
                <Btn label="打印(F8)" className={`${w} ${blueBtn}`} />
                <Btn label="押金打印" className={`${w} ${blueBtn}`} />
                <Btn label="导出账单" className={`${w} ${blueBtn}`} />
                <Btn label="电子优惠券" className={`${w} ${blueBtn}`} />
              </ActionRow>
            </div>
          </div>
          <div className="w-[530px] shrink-0 pt-[11px]">
            <div className="grid grid-cols-3 gap-x-[11.5px] gap-y-[6px]">
              {feeButtons.map((b) => (
                <Btn key={b} label={b} className={`w-full ${greenBtn}`} />
              ))}
            </div>
            <div className="mt-[8px] grid grid-cols-3 gap-x-[11.5px] gap-y-[6px]">
              {payButtons.map((b) => (
                <Btn key={b} label={b} className={`w-full ${payBtn}`} />
              ))}
            </div>
            <SummaryPanel />
          </div>
        </div>
      </div>
    </div>
  );
}

function Marks() {
  return (
    <>
      <div className="absolute left-[1885px] top-[717px] flex h-[99px] w-[22px] items-center justify-center rounded-r-[12px] bg-[#c8c8c8]">
        <svg width="12" height="18" viewBox="0 0 12 18" fill="none" stroke="#eee" strokeWidth="2">
          <path d="M2 1 V17 M5 3 L11 9 L5 15" />
        </svg>
      </div>
      <div className="absolute left-[796px] top-[1163px] h-[74px] w-[368px] rounded-[12px] border-[6px] border-[#ea4023]" />
      <div className="absolute left-[616px] top-[1222px] h-[80px] w-[191px] rounded-[12px] border-[6px] border-[#ea4023]" />
      <div className="absolute left-[1515px] top-[1226px] h-[83px] w-[197px] rounded-[12px] border-[6px] border-[#ea4023]" />
    </>
  );
}

export default function App() {
  return (
    <div lang="zh-CN" className="relative h-[1460px] w-[2990px] overflow-hidden bg-white font-['Liberation_Sans','Noto_Sans_CJK_SC',sans-serif]">
      <Background />
      <div className="absolute inset-x-0 bottom-0 top-[8px] overflow-hidden">
        <Dialog />
      </div>
      <Marks />
    </div>
  );
}
